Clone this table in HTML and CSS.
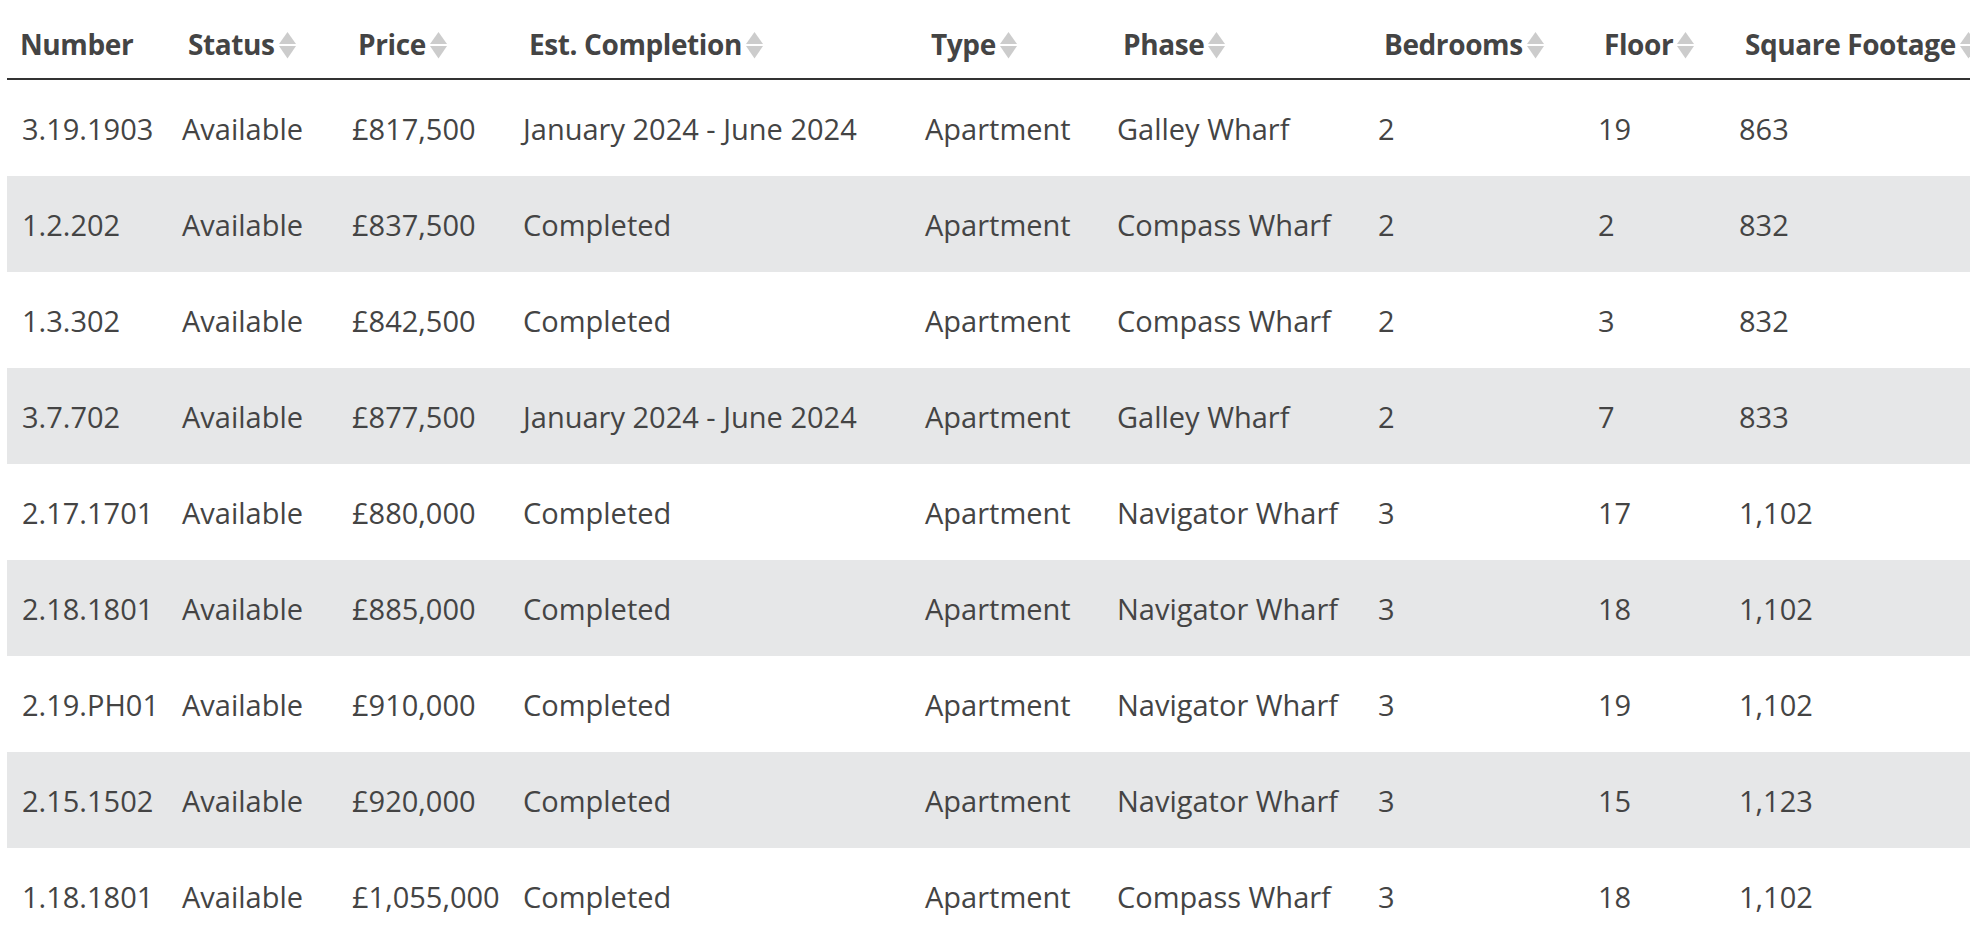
FILE: index.html
```html
<!DOCTYPE html>
<html lang="en">
<head>
<meta charset="utf-8">
<title>Availability</title>
<link rel="stylesheet" href="styles.css">
</head>
<body>
<div class="wrap">
<table class="units">
  <colgroup>
    <col class="c1"><col class="c2"><col class="c3"><col class="c4"><col class="c5"><col class="c6"><col class="c7"><col class="c8"><col class="c9">
  </colgroup>
  <thead>
    <tr>
      <th class="plain">Number</th>
      <th><span class="hd">Status<svg class="sort" viewBox="0 0 17 27" width="17" height="27"><path d="M8.5 0 L17 12 L0 12 Z"/><path d="M0 14 L17 14 L8.5 26.5 Z"/></svg></span></th>
      <th><span class="hd">Price<svg class="sort" viewBox="0 0 17 27" width="17" height="27"><path d="M8.5 0 L17 12 L0 12 Z"/><path d="M0 14 L17 14 L8.5 26.5 Z"/></svg></span></th>
      <th><span class="hd">Est. Completion<svg class="sort" viewBox="0 0 17 27" width="17" height="27"><path d="M8.5 0 L17 12 L0 12 Z"/><path d="M0 14 L17 14 L8.5 26.5 Z"/></svg></span></th>
      <th><span class="hd">Type<svg class="sort" viewBox="0 0 17 27" width="17" height="27"><path d="M8.5 0 L17 12 L0 12 Z"/><path d="M0 14 L17 14 L8.5 26.5 Z"/></svg></span></th>
      <th><span class="hd">Phase<svg class="sort" viewBox="0 0 17 27" width="17" height="27"><path d="M8.5 0 L17 12 L0 12 Z"/><path d="M0 14 L17 14 L8.5 26.5 Z"/></svg></span></th>
      <th><span class="hd">Bedrooms<svg class="sort" viewBox="0 0 17 27" width="17" height="27"><path d="M8.5 0 L17 12 L0 12 Z"/><path d="M0 14 L17 14 L8.5 26.5 Z"/></svg></span></th>
      <th><span class="hd">Floor<svg class="sort" viewBox="0 0 17 27" width="17" height="27"><path d="M8.5 0 L17 12 L0 12 Z"/><path d="M0 14 L17 14 L8.5 26.5 Z"/></svg></span></th>
      <th><span class="hd">Square Footage<svg class="sort" viewBox="0 0 17 27" width="17" height="27"><path d="M8.5 0 L17 12 L0 12 Z"/><path d="M0 14 L17 14 L8.5 26.5 Z"/></svg></span></th>
    </tr>
  </thead>
  <tbody>
    <tr><td>3.19.1903</td><td>Available</td><td>£817,500</td><td>January 2024 - June 2024</td><td>Apartment</td><td>Galley Wharf</td><td>2</td><td>19</td><td>863</td></tr>
    <tr><td>1.2.202</td><td>Available</td><td>£837,500</td><td>Completed</td><td>Apartment</td><td>Compass Wharf</td><td>2</td><td>2</td><td>832</td></tr>
    <tr><td>1.3.302</td><td>Available</td><td>£842,500</td><td>Completed</td><td>Apartment</td><td>Compass Wharf</td><td>2</td><td>3</td><td>832</td></tr>
    <tr><td>3.7.702</td><td>Available</td><td>£877,500</td><td>January 2024 - June 2024</td><td>Apartment</td><td>Galley Wharf</td><td>2</td><td>7</td><td>833</td></tr>
    <tr><td>2.17.1701</td><td>Available</td><td>£880,000</td><td>Completed</td><td>Apartment</td><td>Navigator Wharf</td><td>3</td><td>17</td><td>1,102</td></tr>
    <tr><td>2.18.1801</td><td>Available</td><td>£885,000</td><td>Completed</td><td>Apartment</td><td>Navigator Wharf</td><td>3</td><td>18</td><td>1,102</td></tr>
    <tr><td>2.19.PH01</td><td>Available</td><td>£910,000</td><td>Completed</td><td>Apartment</td><td>Navigator Wharf</td><td>3</td><td>19</td><td>1,102</td></tr>
    <tr><td>2.15.1502</td><td>Available</td><td>£920,000</td><td>Completed</td><td>Apartment</td><td>Navigator Wharf</td><td>3</td><td>15</td><td>1,123</td></tr>
    <tr><td>1.18.1801</td><td>Available</td><td>£1,055,000</td><td>Completed</td><td>Apartment</td><td>Compass Wharf</td><td>3</td><td>18</td><td>1,102</td></tr>
  </tbody>
</table>
</div>
</body>
</html>
```

FILE: styles.css
```css
html, body {
  margin: 0;
  padding: 0;
  background: #ffffff;
}
body {
  overflow: hidden;
  font-family: "Open Sans", "Noto Sans", sans-serif;
  color: #444444;
}
.wrap {
  padding-left: 7px;
  width: 1963px;
  overflow: hidden;
}
.units {
  border-collapse: collapse;
  table-layout: fixed;
  width: 2160px;
}
.c1 { width: 160px; }
.c2 { width: 170px; }
.c3 { width: 171px; }
.c4 { width: 402px; }
.c5 { width: 192px; }
.c6 { width: 261px; }
.c7 { width: 220px; }
.c8 { width: 141px; }
.c9 { width: 443px; }

.units th {
  box-sizing: border-box;
  height: 79px;
  padding: 10px 0 0 21px;
  text-align: left;
  vertical-align: middle;
  font-weight: 700;
  font-size: 28px;
  letter-spacing: -0.4px;
  color: #444444;
  border-bottom: 2px solid #333333;
  white-space: nowrap;
}
.units th.plain {
  padding-left: 13px;
}
.hd {
  display: inline-flex;
  align-items: center;
}
.sort {
  margin-left: 4px;
  margin-top: 2px;
  fill: #cccccc;
  flex: none;
}
.units td {
  height: 96px;
  padding: 0 0 0 15px;
  vertical-align: middle;
  font-size: 29px;
  white-space: nowrap;
  color: #444444;
}
.units tbody tr:nth-child(even) td {
  background: #e6e7e8;
}
```
